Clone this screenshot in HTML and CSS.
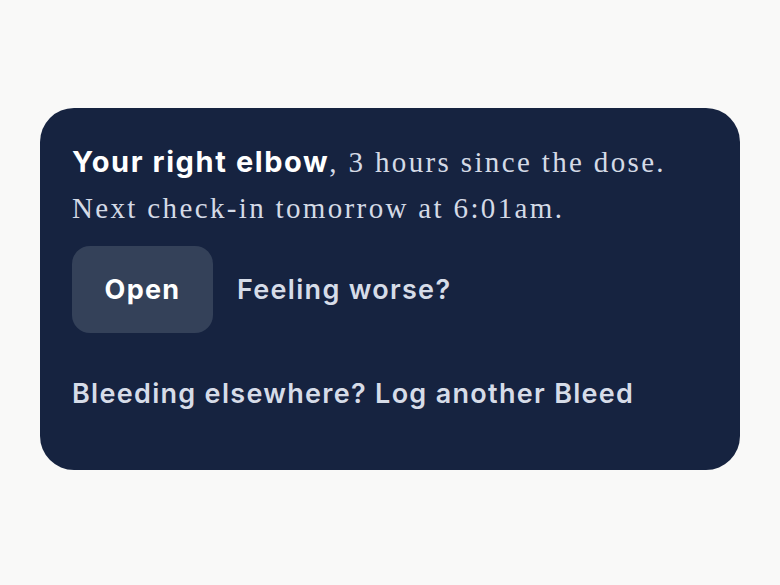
FILE: index.html
```html
<!DOCTYPE html>
<html lang="en">
<head>
<meta charset="utf-8">
<link rel="stylesheet" href="styles.css">
</head>
<body>
<div class="page">
  <section class="card">
    <p class="summary"><strong class="site">Your right elbow</strong>, 3 hours since the dose.<br>Next check-in tomorrow at 6:01am.</p>
    <div class="actions">
      <button class="btn">Open</button>
      <a class="link">Feeling worse?</a>
    </div>
    <a class="link another">Bleeding elsewhere? Log another Bleed</a>
  </section>
</div>
</body>
</html>
```
FILE: styles.css
```css
html, body {
  margin: 0;
  padding: 0;
  background: #f9f9f8;
}
.page {
  width: 780px;
  height: 585px;
  padding: 108px 40px 0;
  box-sizing: border-box;
}
.card {
  background: #162340;
  border-radius: 34px;
  height: 362px;
  box-sizing: border-box;
  padding: 31px 32px 0 32px;
  display: flex;
  flex-direction: column;
  align-items: flex-start;
}
.summary {
  margin: 0;
  font-family: "Liberation Serif", serif;
  font-size: 29px;
  line-height: 46px;
  letter-spacing: 2.35px;
  color: #d4dae6;
  white-space: nowrap;
}
.site {
  font-family: Inter, sans-serif;
  font-weight: 700;
  font-size: 29px;
  color: #ffffff;
  letter-spacing: 1.6px;
}
.actions {
  display: flex;
  align-items: center;
  gap: 24px;
  margin-top: 15px;
}
.btn {
  width: 141px;
  height: 87px;
  border: none;
  border-radius: 18px;
  background: #344159;
  color: #ffffff;
  font-family: Inter, sans-serif;
  font-weight: 700;
  font-size: 27px;
  letter-spacing: 1.3px;
  padding: 0;
}
.link {
  font-family: Inter, sans-serif;
  font-weight: 600;
  font-size: 27px;
  letter-spacing: 1.3px;
  color: #d6dce8;
}
.another {
  margin-top: 44px;
}
```
